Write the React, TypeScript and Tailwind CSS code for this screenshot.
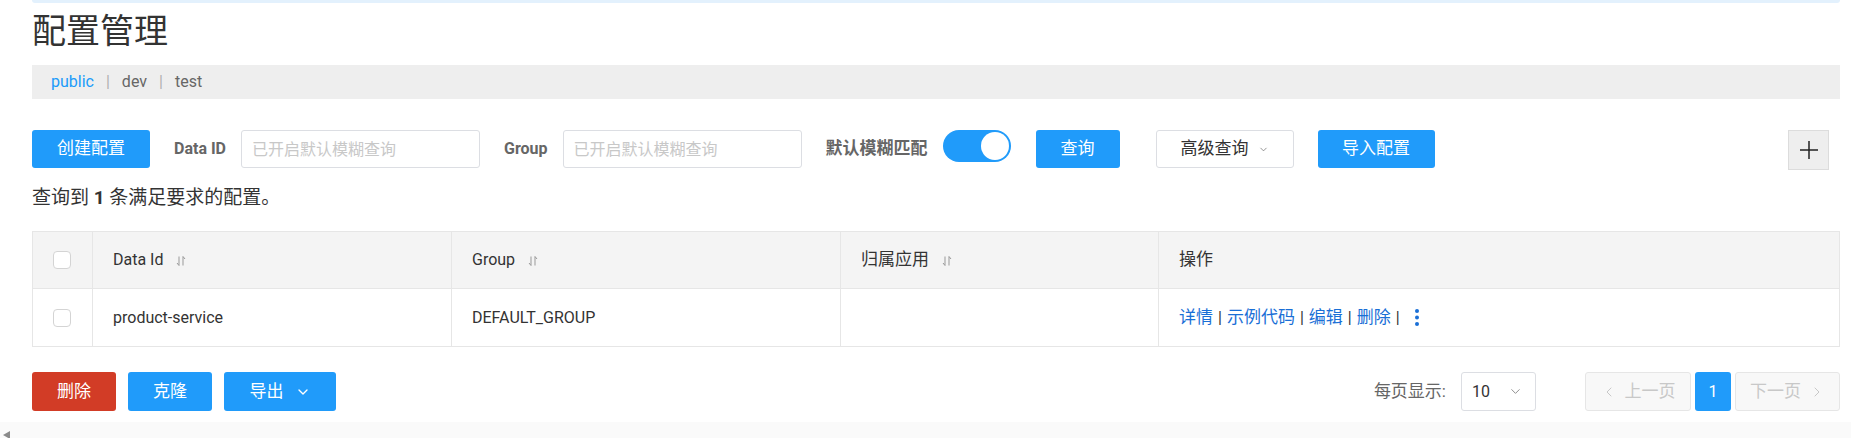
import { ChevronDown, ChevronLeft, ChevronRight } from "lucide-react";

function SortIcon() {
  return (
    <svg width="10" height="12" viewBox="0 0 10 12" className="ml-[13px] inline-block" fill="none" stroke="#999" strokeWidth="1">
      <path d="M3 1.5V10.5L1 8" />
      <path d="M7 10.5V1.5L9 4" />
    </svg>
  );
}

function Checkbox() {
  return <span className="block size-[18px] rounded-[4px] border border-[#d4d4d4] bg-white" />;
}

function Sep() {
  return <span className="mx-[5px] text-[16px] text-[#333]">|</span>;
}

export default function App() {
  return (
    <div className="bg-white font-['Roboto','Noto_Sans_CJK_SC',sans-serif] text-[16px] text-[#333]">
      <div className="ml-[32px] w-[1808px]">
        <div className="h-[3px] rounded-b-[3px] bg-[#e3f1fd]" />

        <h1 className="mt-[11px] text-[34px] leading-[34px] font-normal text-[#333]">配置管理</h1>

        <div className="mt-[17px] flex h-[34px] items-center bg-[#eeeeee] pl-[19px] text-[16px]">
          <span className="text-[#209bfa]">public</span>
          <span className="mx-[12px] text-[#b0b0b0]">|</span>
          <span className="text-[#666]">dev</span>
          <span className="mx-[12px] text-[#b0b0b0]">|</span>
          <span className="text-[#666]">test</span>
        </div>

        {/* toolbar */}
        <div className="mt-[31px] flex h-[40px] items-start text-[17px]">
          <button className="h-[38px] w-[118px] rounded-[3px] bg-[#209bfa] text-white">创建配置</button>

          <label className="ml-[24px] flex h-[38px] items-center">
            <span className="text-[16px] font-bold text-[#666]">Data ID</span>
            <input
              placeholder="已开启默认模糊查询"
              className="ml-[15px] h-[38px] w-[239px] rounded-[3px] border border-[#dcdee3] px-[10px] text-[16px] outline-none placeholder:text-[#c8c8c8]"
            />
          </label>

          <label className="ml-[24px] flex h-[38px] items-center">
            <span className="text-[16px] font-bold text-[#666]">Group</span>
            <input
              placeholder="已开启默认模糊查询"
              className="ml-[15px] h-[38px] w-[239px] rounded-[3px] border border-[#dcdee3] px-[10px] text-[16px] outline-none placeholder:text-[#c8c8c8]"
            />
          </label>

          <div className="ml-[24px] flex h-[38px] items-center">
            <span className="font-bold text-[#666]">默认模糊匹配</span>
            <span className="ml-[15px] mb-[6px] flex h-[32px] w-[68px] items-center justify-end rounded-full bg-[#209bfa] pr-[2px]">
              <span className="size-[28px] rounded-full bg-white" />
            </span>
          </div>

          <button className="ml-[25px] h-[38px] w-[84px] rounded-[3px] bg-[#209bfa] text-white">查询</button>

          <button className="ml-[36px] flex h-[38px] w-[138px] items-center justify-center rounded-[3px] border border-[#dcdee3] bg-white text-[#333]">
            高级查询
            <ChevronDown size={11} strokeWidth={1.5} className="ml-[9px] text-[#666]" />
          </button>

          <button className="ml-[24px] h-[38px] w-[117px] rounded-[3px] bg-[#209bfa] text-white">导入配置</button>

          <button className="ml-auto mr-[11px] flex h-[40px] w-[41px] items-center justify-center border border-[#dcdcdc] bg-[#eeeeee]">
            <svg width="20" height="20" viewBox="0 0 20 20" stroke="#222" strokeWidth="1.5">
              <path d="M10 1V19M1 10H19" />
            </svg>
          </button>
        </div>

        <p className="mt-[16px] text-[19px] leading-[24px] text-[#333]">
          查询到 <b className="font-bold">1</b> 条满足要求的配置。
        </p>

        {/* table */}
        <table className="mt-[21px] w-full table-fixed border-collapse border border-[#e6e6e6] text-left">
          <colgroup>
            <col className="w-[60px]" />
            <col className="w-[359px]" />
            <col className="w-[389px]" />
            <col className="w-[318px]" />
            <col />
          </colgroup>
          <thead>
            <tr className="h-[57px] bg-[#f4f4f4]">
              <th className="border border-[#e6e6e6] px-[20px] font-normal">
                <Checkbox />
              </th>
              <th className="border border-[#e6e6e6] px-[20px] font-normal">
                Data Id<SortIcon />
              </th>
              <th className="border border-[#e6e6e6] px-[20px] font-normal">
                Group<SortIcon />
              </th>
              <th className="border border-[#e6e6e6] px-[20px] text-[17px] font-normal">
                归属应用<SortIcon />
              </th>
              <th className="border border-[#e6e6e6] px-[20px] text-[17px] font-normal">操作</th>
            </tr>
          </thead>
          <tbody>
            <tr className="h-[58px]">
              <td className="border border-[#e6e6e6] px-[20px]">
                <Checkbox />
              </td>
              <td className="border border-[#e6e6e6] px-[20px]">product-service</td>
              <td className="border border-[#e6e6e6] px-[20px]">DEFAULT_GROUP</td>
              <td className="border border-[#e6e6e6] px-[20px]"></td>
              <td className="border border-[#e6e6e6] px-[20px]">
                <div className="flex items-center text-[17px] text-[#1a6fd6]">
                  <span>详情</span>
                  <Sep />
                  <span>示例代码</span>
                  <Sep />
                  <span>编辑</span>
                  <Sep />
                  <span>删除</span>
                  <Sep />
                  <svg width="4" height="17" viewBox="0 0 4 17" className="ml-[10px]" fill="#1a6fd6">
                    <circle cx="2" cy="2" r="2" />
                    <circle cx="2" cy="8.5" r="2" />
                    <circle cx="2" cy="15" r="2" />
                  </svg>
                </div>
              </td>
            </tr>
          </tbody>
        </table>

        {/* bottom bar */}
        <div className="mt-[25px] flex h-[39px] items-center text-[17px]">
          <button className="h-[39px] w-[84px] rounded-[3px] bg-[#d23c26] text-white">删除</button>
          <button className="ml-[12px] h-[39px] w-[84px] rounded-[3px] bg-[#209bfa] text-white">克隆</button>
          <button className="ml-[12px] flex h-[39px] w-[112px] items-center justify-center rounded-[3px] bg-[#209bfa] text-white">
            导出
            <ChevronDown size={16} strokeWidth={2} className="ml-[11px]" />
          </button>

          <div className="ml-auto flex items-center">
            <span className="text-[#666]">每页显示:</span>
            <div className="ml-[15px] flex h-[39px] w-[75px] items-center justify-between rounded-[3px] border border-[#dcdee3] pl-[10px] pr-[12px]">
              <span className="text-[16px] text-[#333]">10</span>
              <ChevronDown size={15} strokeWidth={1.5} className="text-[#888]" />
            </div>

            <button className="ml-[49px] flex h-[39px] w-[106px] items-center justify-center rounded-[3px] border border-[#e6e6e6] bg-[#f8f8f8] text-[#c8c8c8]">
              <ChevronLeft size={16} strokeWidth={1.5} className="mr-[8px]" />
              上一页
            </button>
            <button className="ml-[4px] h-[39px] w-[36px] rounded-[3px] bg-[#209bfa] text-[16px] text-white">1</button>
            <button className="ml-[4px] flex h-[39px] w-[105px] items-center justify-center rounded-[3px] border border-[#e6e6e6] bg-[#f8f8f8] text-[#c8c8c8]">
              下一页
              <ChevronRight size={16} strokeWidth={1.5} className="ml-[8px]" />
            </button>
          </div>
        </div>
      </div>

      {/* horizontal scrollbar */}
      <div className="mt-[11px] h-[17px] bg-[#fafafa] pl-[3px] pt-[9px]">
        <svg width="7" height="8" viewBox="0 0 7 8" fill="#8a8a8a">
          <path d="M0 4L7 0V8Z" />
        </svg>
      </div>
    </div>
  );
}
